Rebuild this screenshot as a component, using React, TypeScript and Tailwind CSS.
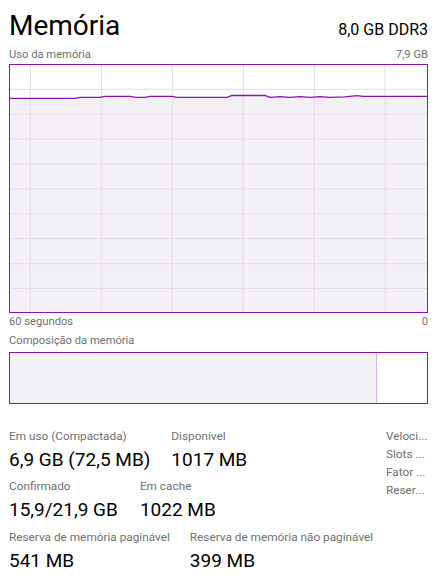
const usage: [number, number][] = [
  [0, 33.3], [65, 33.3], [70, 32.3], [90, 32.3], [95, 31.3], [120, 31.3], [126, 32.3],
  [135, 32.3], [140, 31.3], [162, 31.3], [167, 32.3], [217, 32.3], [222, 30.5],
  [255, 30.5], [260, 32.3], [270, 31.6], [280, 32.3], [290, 31.6], [300, 32.3],
  [310, 31.6], [320, 32.3], [335, 31.8], [347, 30.6], [353, 31.3], [417, 31.3],
];

const vLines = [20.3, 91.3, 162.3, 233.3, 304.3, 375];
const hLines = [24.3, 49.2, 74.1, 99, 123.9, 148.8, 173.7, 198.6, 223.5];

const UsageChart = () => {
  const pts = usage.map(([x, y]) => `${x},${y}`).join(' ');
  return (
    <svg width="417" height="247" className="block">
      <polygon points={`0,247 ${pts} 417,247`} fill="#f2f0f4" />
      {vLines.map((x) => (
        <line key={x} x1={x} x2={x} y1={0} y2={247} stroke="#e8d6ee" strokeWidth="1" />
      ))}
      {hLines.map((y) => (
        <line key={y} x1={0} x2={417} y1={y} y2={y} stroke="#e8d6ee" strokeWidth="1" />
      ))}
      <polyline points={pts} fill="none" stroke="#8b12ae" strokeWidth="1.3" />
    </svg>
  );
};

const Stat = ({label, value}: {label: string; value: string}) => (
  <div className="whitespace-nowrap">
    <div className="text-[11.8px] leading-[16px] text-[#707070]">{label}</div>
    <div className="mt-[4px] text-[19px] leading-[24px] text-black">{value}</div>
  </div>
);

export default function App() {
  return (
    <div className="w-[439px] h-[583px] bg-white px-[9px] font-['Roboto',sans-serif] overflow-hidden">
      <div className="w-[419px]">
        <div className="pt-[12px] flex items-baseline justify-between">
          <h1 className="text-[28px] leading-[28px] text-black">Memória</h1>
          <span className="text-[16px] leading-[16px] text-black">8,0 GB DDR3</span>
        </div>

        <div className="mt-[7px] h-[17px] flex justify-between text-[11.2px] leading-[16px] text-[#707070]">
          <span>Uso da memória</span>
          <span>7,9 GB</span>
        </div>
        <div className="h-[249px] border border-[#8b12ae]">
          <UsageChart />
        </div>

        <div className="mt-[1px] flex justify-between text-[11.2px] leading-[16px] text-[#707070]">
          <span>60 segundos</span>
          <span>0</span>
        </div>
        <div className="mt-[3px] text-[11.2px] leading-[16px] text-[#707070]">Composição da memória</div>
        <div className="mt-[3px] h-[52px] border border-[#8b12ae] flex">
          <div className="w-[367px] bg-[#f2f0f4] border-r border-[#d9b3e4]" />
          <div className="flex-1 bg-white" />
        </div>

        <div className="mt-[24px] flex justify-between">
          <div className="flex flex-col">
            <div className="flex gap-[21px]">
              <Stat label="Em uso (Compactada)" value="6,9 GB (72,5 MB)" />
              <Stat label="Disponível" value="1017 MB" />
            </div>
            <div className="mt-[6px] flex gap-[22px]">
              <Stat label="Confirmado" value="15,9/21,9 GB" />
              <Stat label="Em cache" value="1022 MB" />
            </div>
            <div className="mt-[7px] flex gap-[20px]">
              <Stat label="Reserva de memória paginável" value="541 MB" />
              <Stat label="Reserva de memória não paginável" value="399 MB" />
            </div>
          </div>
          <div className="w-[42px] -mt-[1px] text-[11.8px] leading-[18px] text-[#707070] whitespace-nowrap">
            <div>Veloci...</div>
            <div>Slots ...</div>
            <div>Fator ...</div>
            <div>Reser...</div>
          </div>
        </div>
      </div>
    </div>
  );
}
